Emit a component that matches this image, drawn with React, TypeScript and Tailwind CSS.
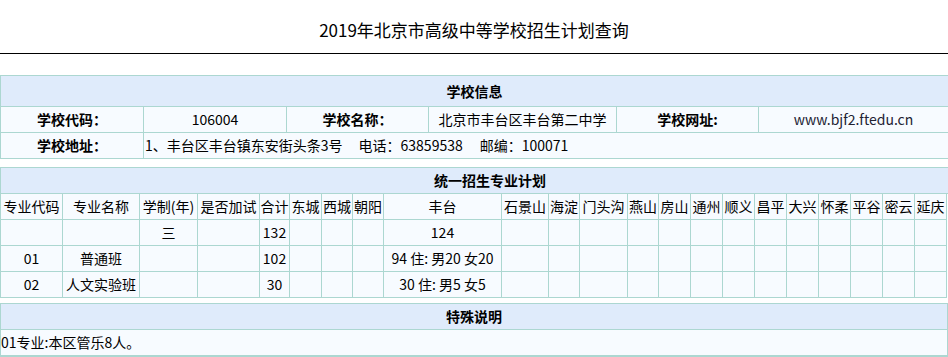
import React from "react";

const font = { fontFamily: '"Noto Sans CJK SC", "Noto Sans", sans-serif' };

const bd = "border border-[#acd7d1]";
const hd = `${bd} bg-[#dfebfb] font-bold text-center text-[14px] p-0`;
const td = `${bd} bg-[#f7fbff] text-center text-[14px] p-0 h-[26px] whitespace-nowrap`;

const districts = ["石景山", "海淀", "门头沟", "燕山", "房山", "通州", "顺义", "昌平", "大兴", "怀柔", "平谷", "密云", "延庆"];
const widths2 = [62, 77, 58, 62, 30, 32, 31, 31, 118, 47, 31, 48, 31, 32, 32, 32, 32, 32, 32, 32, 32, 32, 33];

export default function App() {
  const rows = [
    ["", "", "三", "", "132", "", "", "", "124"],
    ["01", "普通班", "", "", "102", "", "", "", "94 住: 男20 女20"],
    ["02", "人文实验班", "", "", "30", "", "", "", "30 住: 男5 女5"],
  ];
  return (
    <div className="w-[948px] h-[357px] overflow-hidden bg-white text-black" style={font}>
      <div className="h-[54px] border-b border-black flex items-start justify-center pt-[18px]">
        <span className="text-[17px] leading-[24px]">2019年北京市高级中等学校招生计划查询</span>
      </div>

      <table className="mt-[21px] w-[948px] table-fixed border-collapse">
        <colgroup>
          <col className="w-[143px]" />
          <col className="w-[143px]" />
          <col className="w-[142px]" />
          <col className="w-[188px]" />
          <col className="w-[142px]" />
          <col className="w-[190px]" />
        </colgroup>
        <tbody>
          <tr>
            <td colSpan={6} className={`${hd} h-[31px]`}>学校信息</td>
          </tr>
          <tr>
            <td className={`${td} font-bold`}>学校代码：</td>
            <td className={td}>106004</td>
            <td className={`${td} font-bold`}>学校名称：</td>
            <td className={td}>北京市丰台区丰台第二中学</td>
            <td className={`${td} font-bold`}>学校网址:</td>
            <td className={`${td} text-[#223]`}>www.bjf2.ftedu.cn</td>
          </tr>
          <tr>
            <td className={`${td} font-bold`}>学校地址：</td>
            <td colSpan={5} className={`${td} text-left pl-[1px]`}>
              1、丰台区丰台镇东安街头条3号
              <span className="ml-[16px]">电话：63859538</span>
              <span className="ml-[17px]">邮编：100071</span>
            </td>
          </tr>
        </tbody>
      </table>

      <table className="mt-[8px] w-[948px] table-fixed border-collapse">
        <colgroup>
          {widths2.map((w, i) => (
            <col key={i} style={{ width: w }} />
          ))}
        </colgroup>
        <tbody>
          <tr>
            <td colSpan={23} className={`${hd} h-[26px]`}>统一招生专业计划</td>
          </tr>
          <tr>
            {["专业代码", "专业名称", "学制(年)", "是否加试", "合计", "东城", "西城", "朝阳", "丰台", ...districts].map((h, i) => (
              <td key={i} className={td}>{h}</td>
            ))}
          </tr>
          {rows.map((r, ri) => (
            <tr key={ri}>
              {r.map((c, ci) => (
                <td key={ci} className={td}>{c}</td>
              ))}
              {districts.map((_, di) => (
                <td key={`d${di}`} className={td}></td>
              ))}
            </tr>
          ))}
        </tbody>
      </table>

      <table className="mt-[5px] w-[948px] table-fixed border-collapse border-b-2 border-[#acd7d1]">
        <tbody>
          <tr>
            <td className={`${hd} h-[26px]`}>特殊说明</td>
          </tr>
          <tr>
            <td className={`${td} text-left pl-0`}>01专业:本区管乐8人。</td>
          </tr>
        </tbody>
      </table>
    </div>
  );
}
